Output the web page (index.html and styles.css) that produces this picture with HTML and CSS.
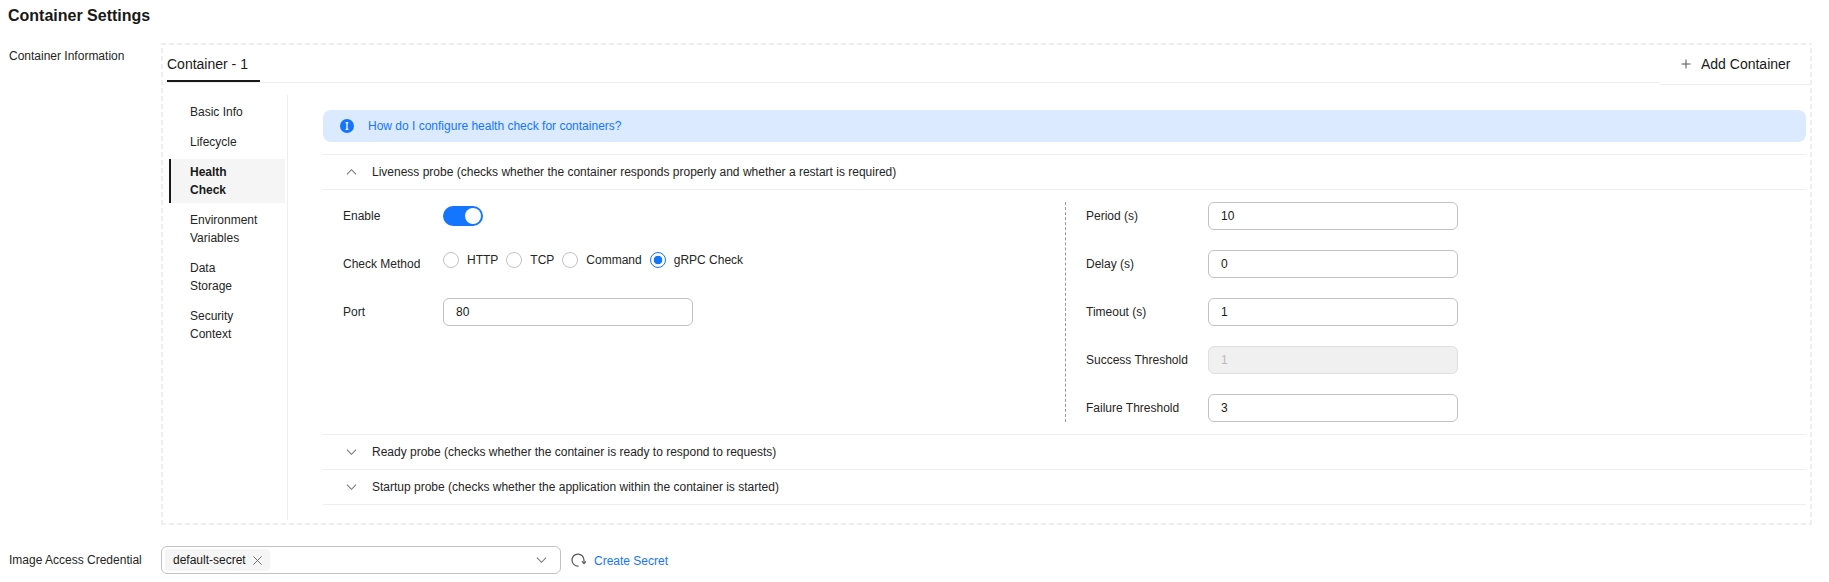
FILE: index.html
```html
<!DOCTYPE html>
<html lang="en">
<head>
<meta charset="utf-8">
<title>Container Settings</title>
<link rel="stylesheet" href="styles.css">
</head>
<body>
<h1 class="title">Container Settings</h1>
<div class="row">
  <div class="row-label">Container Information</div>
  <div class="box">
    <div class="tabs">
      <div class="tab-list"><div class="tab">Container - 1</div></div>
      <div class="add">
        <svg class="add-icon" viewBox="0 0 10 10"><path d="M5 .5v9M.5 5h9"/></svg>
        <span>Add Container</span>
      </div>
    </div>
    <div class="body">
      <nav class="side">
        <div class="side-item">Basic Info</div>
        <div class="side-item">Lifecycle</div>
        <div class="side-item active">Health Check</div>
        <div class="side-item">Environment Variables</div>
        <div class="side-item">Data Storage</div>
        <div class="side-item">Security Context</div>
      </nav>
      <main class="main">
        <div class="alert">
          <svg class="info" viewBox="0 0 14 14"><circle cx="7" cy="7" r="7"/><path d="M5.6 3.6h2.8M7 3.6v6.8M5.6 10.4h2.8"/></svg>
          <a class="link">How do I configure health check for containers?</a>
        </div>
        <div class="collapse">
          <div class="col-head">
            <svg class="chev" viewBox="0 0 12 8"><path d="M1 6.5 6 1.5l5 5"/></svg>
            <span>Liveness probe (checks whether the container responds properly and whether a restart is required)</span>
          </div>
          <div class="col-body">
            <div class="form-left">
              <div class="form-row"><label class="lbl-l">Enable</label><span class="switch"><span class="knob"></span></span></div>
              <div class="form-row top"><label class="lbl-l">Check Method</label>
                <div class="radios">
                  <span class="radio"><i class="dot"></i>HTTP</span>
                  <span class="radio"><i class="dot"></i>TCP</span>
                  <span class="radio"><i class="dot"></i>Command</span>
                  <span class="radio"><i class="dot on"></i>gRPC Check</span>
                </div>
              </div>
              <div class="form-row"><label class="lbl-l">Port</label><div class="input">80</div></div>
            </div>
            <div class="form-right">
              <div class="form-row"><label class="lbl-r">Period (s)</label><div class="input">10</div></div>
              <div class="form-row"><label class="lbl-r">Delay (s)</label><div class="input">0</div></div>
              <div class="form-row"><label class="lbl-r">Timeout (s)</label><div class="input">1</div></div>
              <div class="form-row"><label class="lbl-r">Success Threshold</label><div class="input disabled">1</div></div>
              <div class="form-row"><label class="lbl-r">Failure Threshold</label><div class="input">3</div></div>
            </div>
          </div>
          <div class="col-head">
            <svg class="chev" viewBox="0 0 12 8"><path d="M1 1.5l5 5 5-5"/></svg>
            <span>Ready probe (checks whether the container is ready to respond to requests)</span>
          </div>
          <div class="col-head">
            <svg class="chev" viewBox="0 0 12 8"><path d="M1 1.5l5 5 5-5"/></svg>
            <span>Startup probe (checks whether the application within the container is started)</span>
          </div>
        </div>
      </main>
    </div>
  </div>
</div>
<div class="row cred">
  <div class="row-label">Image Access Credential</div>
  <div class="select">
    <span class="tag">default-secret<svg class="tag-x" viewBox="0 0 12 12"><path d="M1.5 1.5l9 9M10.5 1.5l-9 9"/></svg></span>
    <svg class="select-chev" viewBox="0 0 12 8"><path d="M1 1.5l5 5 5-5"/></svg>
  </div>
  <svg class="refresh" viewBox="0 0 16 16"><path d="M8.6 14A6 6 0 1 1 14 8v3"/><path d="M12 9.4l2 2.2 1.9-2.2"/></svg>
  <a class="link create">Create Secret</a>
</div>
</body>
</html>
```
FILE: styles.css
```css
* { box-sizing: border-box; }
html, body { margin: 0; background: #fff; }
body {
  font-family: "Liberation Sans", Arial, sans-serif;
  font-size: 12px;
  color: #191919;
  padding-right: 17px;
  height: 582px;
  overflow: hidden;
}
.title {
  margin: 0 0 11px 8px;
  height: 32px;
  font-size: 16px;
  line-height: 32px;
  font-weight: 700;
  color: #191919;
}
.row { display: flex; align-items: flex-start; }
.row-label {
  width: 161px;
  flex: none;
  padding: 4px 0 0 9px;
  line-height: 18px;
  color: #252525;
}
.box {
  flex: 1;
  min-width: 0;
  padding: 2px 2px 5px 6px;
  background-image:
    repeating-linear-gradient(90deg, #eeeeee 0 5px, transparent 5px 8px),
    repeating-linear-gradient(90deg, #eeeeee 0 5px, transparent 5px 8px),
    repeating-linear-gradient(0deg, #eeeeee 0 5px, transparent 5px 8px),
    repeating-linear-gradient(0deg, #eeeeee 0 5px, transparent 5px 8px);
  background-size: 100% 2px, 100% 2px, 2px 100%, 2px 100%;
  background-position: left top, left bottom, left top, right top;
  background-repeat: no-repeat;
}
.tabs { display: flex; align-items: flex-start; height: 40px; }
.tab-list { flex: 1; height: 38px; border-bottom: 1px solid #eeeeee; }
.tab {
  width: 93px;
  height: 37px;
  font-size: 14px;
  line-height: 38px;
  border-bottom: 2px solid #191919;
  color: #191919;
}
.add {
  width: 150px;
  height: 40px;
  margin-left: -2px;
  padding: 0 0 2px 21px;
  display: flex;
  align-items: center;
  background: #fff;
  border-bottom: 1px solid #eeeeee;
  font-size: 14px;
  line-height: 38px;
  color: #191919;
}
.add-icon { width: 10px; height: 10px; margin-right: 10px; fill: none; stroke: #555; stroke-width: 1; }
.body { display: flex; margin-top: 10px; }
.side {
  width: 121px;
  flex: none;
  padding: 4px 0 0 2px;
  border-right: 1px solid #eeeeee;
  display: flex;
  flex-direction: column;
  gap: 4px;
  height: 425px;
}
.side-item {
  width: 116px;
  padding: 4px 26px 4px 19px;
  line-height: 18px;
  border-left: 2px solid transparent;
  color: #252525;
}
.side-item.active {
  background: #f5f5f5;
  border-left-color: #191919;
  font-weight: 700;
  color: #191919;
}
.main { flex: 1; min-width: 0; margin: 15px 4px 0 35px; }
.alert {
  height: 32px;
  border-radius: 8px;
  background: #dbeafe;
  display: flex;
  align-items: center;
  padding-left: 17px;
}
.info { width: 14px; height: 14px; margin-right: 14px; }
.info circle { fill: #1476ff; }
.info path { fill: none; stroke: #fff; stroke-width: 1.3; }
.link { color: #1476ff; }
.collapse { margin-top: 12px; border-top: 1px solid #eeeeee; }
.col-head {
  height: 35px;
  display: flex;
  align-items: center;
  border-bottom: 1px solid #eeeeee;
  padding-left: 23px;
  color: #252525;
}
.chev { width: 11px; height: 8px; margin-right: 15px; fill: none; stroke: #777; stroke-width: 1.2; }
.col-body {
  display: flex;
  padding: 12px 0;
  border-bottom: 1px solid #eeeeee;
  height: 245px;
}
.form-left { width: 742px; padding-left: 20px; display: flex; flex-direction: column; gap: 20px; }
.form-right {
  flex: 1;
  border-left: 1px dashed #999;
  padding-left: 20px;
  display: flex;
  flex-direction: column;
  gap: 20px;
}
.form-row { display: flex; align-items: center; height: 28px; }
.form-row.top { align-items: flex-start; }
.lbl-l { width: 100px; flex: none; line-height: 28px; color: #252525; }
.lbl-r { width: 122px; flex: none; line-height: 28px; color: #252525; }
.switch {
  width: 40px;
  height: 20px;
  border-radius: 10px;
  background: #1476ff;
  display: flex;
  justify-content: flex-end;
  align-items: center;
  padding-right: 2px;
}
.knob { width: 16px; height: 16px; border-radius: 50%; background: #fff; }
.radios { display: flex; height: 20px; align-items: center; line-height: 20px; }
.radio { display: flex; align-items: center; margin-right: 8px; color: #252525; white-space: nowrap; }
.dot {
  width: 16px;
  height: 16px;
  border-radius: 50%;
  border: 1px solid #c2c2c2;
  margin-right: 8px;
  background: #fff;
  display: block;
}
.dot.on {
  border-color: #1476ff;
  background: radial-gradient(circle, #1476ff 0 4px, #fff 4.6px);
}
.input {
  width: 250px;
  height: 28px;
  border: 1px solid #c2c2c2;
  border-radius: 6px;
  padding-left: 12px;
  line-height: 26px;
  color: #191919;
}
.input.disabled { background: #f0f0f0; border-color: #dfdfdf; color: #bbb; }
.cred { margin-top: 21px; }
.cred .row-label { padding-top: 5px; }
.select {
  width: 400px;
  height: 28px;
  border: 1px solid #c2c2c2;
  border-radius: 6px;
  padding-left: 3px;
  display: flex;
  align-items: center;
}
.tag {
  height: 22px;
  width: 105px;
  border-radius: 4px;
  background: #f5f5f5;
  display: flex;
  align-items: center;
  padding-left: 8px;
  line-height: 22px;
  color: #191919;
}
.tag-x { width: 11px; height: 11px; margin-left: 6px; fill: none; stroke: #666; stroke-width: 1; }
.select-chev { width: 11px; height: 8px; margin-left: auto; margin-right: 13px; fill: none; stroke: #777; stroke-width: 1.2; }
.refresh { width: 16px; height: 16px; margin: 6px 0 0 9px; flex: none; fill: none; stroke: #555; stroke-width: 1.2; }
.create { margin: 6px 0 0 8px; line-height: 18px; }
```
